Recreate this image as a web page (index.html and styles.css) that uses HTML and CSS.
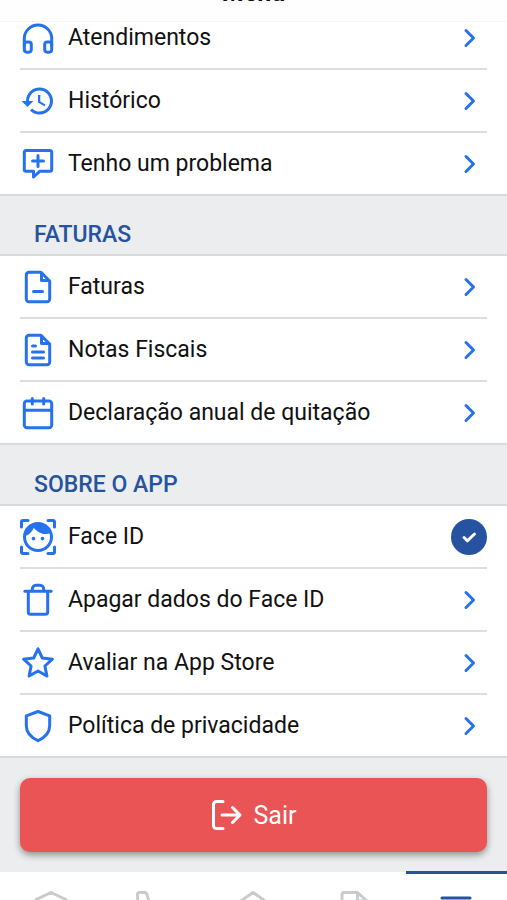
FILE: index.html
```html
<!DOCTYPE html>
<html lang="pt-BR">
<head>
<meta charset="utf-8">
<meta name="viewport" content="width=device-width, initial-scale=1">
<title>Menu</title>
<link rel="stylesheet" href="styles.css">
</head>
<body>
<svg class="defs" aria-hidden="true">
  <symbol id="chevron" viewBox="0 0 36 36"><path d="M15 10.500l7.500 7.500-7.500 7.500"/></symbol>
</svg>
<div class="app">
  <header class="topbar"><h1>Menu</h1></header>

  <main>
    <ul class="list list-first">
      <li><a class="row" href="#">
        <svg class="icon" viewBox="0 0 36 36"><path d="M4.300 25.500V18.500a13.700 13.500 0 0 1 27.400 0V25.500"/><rect x="4.300" y="22" width="7" height="10.200" rx="2.600"/><rect x="24.700" y="22" width="7" height="10.200" rx="2.600"/></svg>
        <span>Atendimentos</span><svg class="chevron"><use href="#chevron"/></svg></a></li>
      <li><a class="row" href="#">
        <svg class="icon solid" viewBox="0 0 24 24"><path d="M13 3c-4.970 0-9 4.030-9 9H1l3.890 3.890.070.140L9 12H6c0-3.870 3.130-7 7-7s7 3.130 7 7-3.130 7-7 7c-1.930 0-3.680-.790-4.940-2.060l-1.420 1.420C8.270 19.990 10.510 21 13 21c4.970 0 9-4.030 9-9s-4.030-9-9-9zm-1 5v5l4.280 2.540.720-1.210-3.500-2.080V8H12z"/></svg>
        <span>Histórico</span><svg class="chevron"><use href="#chevron"/></svg></a></li>
      <li><a class="row" href="#">
        <svg class="icon" viewBox="0 0 36 36"><path d="M6 4.500H30a1.700 1.700 0 0 1 1.700 1.700V23.500a1.700 1.700 0 0 1-1.700 1.700H20L13.500 31V25.200H6a1.700 1.700 0 0 1-1.700-1.700V6.200A1.700 1.700 0 0 1 6 4.500zM18 9.500v11M12.500 15h11"/></svg>
        <span>Tenho um problema</span><svg class="chevron"><use href="#chevron"/></svg></a></li>
    </ul>

    <h2 class="section">FATURAS</h2>
    <ul class="list">
      <li><a class="row" href="#">
        <svg class="icon" viewBox="0 0 36 36"><path d="M9 3.300H21L29.700 12V30a2.700 2.700 0 0 1-2.700 2.700H9A2.700 2.700 0 0 1 6.300 30V6A2.700 2.700 0 0 1 9 3.300zM21.500 4V11.500h7.500M13.500 22.500h9"/></svg>
        <span>Faturas</span><svg class="chevron"><use href="#chevron"/></svg></a></li>
      <li><a class="row" href="#">
        <svg class="icon" viewBox="0 0 36 36"><path d="M9 3.300H21L29.700 12V30a2.700 2.700 0 0 1-2.700 2.700H9A2.700 2.700 0 0 1 6.300 30V6A2.700 2.700 0 0 1 9 3.300zM21.500 4V11.500h7.500M12.500 14h3M12.500 20h11M12.500 26h11"/></svg>
        <span>Notas Fiscais</span><svg class="chevron"><use href="#chevron"/></svg></a></li>
      <li><a class="row" href="#">
        <svg class="icon" viewBox="0 0 36 36"><rect x="4.300" y="6" width="27.400" height="26.700" rx="2.700"/><path d="M4.300 15.200H31.700M12.300 3.500V9M23.700 3.500V9"/></svg>
        <span>Declaração anual de quitação</span><svg class="chevron"><use href="#chevron"/></svg></a></li>
    </ul>

    <h2 class="section">SOBRE O APP</h2>
    <ul class="list">
      <li><label class="row">
        <svg class="icon" viewBox="0 0 36 36"><path d="M1.500 8V3Q1.500 1.500 3 1.500H8M28 1.500h5q1.500 0 1.500 1.500V8M34.500 28v5q0 1.500-1.500 1.500H28M8 34.500H3Q1.500 34.500 1.500 33V28"/><path class="fill" transform="scale(1.500)" d="M9 11.750c-.690 0-1.250.560-1.250 1.250s.560 1.250 1.250 1.250 1.250-.560 1.250-1.250-.560-1.250-1.250-1.250zm6 0c-.690 0-1.250.560-1.250 1.250s.560 1.250 1.250 1.250 1.250-.560 1.250-1.250-.560-1.250-1.250-1.250zM12 2C6.480 2 2 6.480 2 12s4.480 10 10 10 10-4.480 10-10S17.520 2 12 2zm0 18c-4.410 0-8-3.590-8-8 0-.290.020-.580.050-.860 2.360-1.050 4.230-2.980 5.210-5.370C11.070 8.330 14.050 10 17.420 10c.780 0 1.530-.090 2.250-.260.210.710.330 1.470.330 2.260 0 4.410-3.590 8-8 8z"/></svg>
        <span>Face ID</span>
        <span class="check"><input type="checkbox" checked><svg viewBox="0 0 36 36"><path d="M13 18.500l3.300 3.300L23.500 15"/></svg></span></label></li>
      <li><a class="row" href="#">
        <svg class="icon" viewBox="0 0 36 36"><path d="M4.800 9.200H31.200M8.300 9.200V30a2.300 2.300 0 0 0 2.300 2.300H25.400A2.300 2.300 0 0 0 27.700 30V9.200M12.300 9V7a3.700 3.700 0 0 1 3.700-3.700h4A3.700 3.700 0 0 1 23.700 7V9"/></svg>
        <span>Apagar dados do Face ID</span><svg class="chevron"><use href="#chevron"/></svg></a></li>
      <li><a class="row" href="#">
        <svg class="icon" viewBox="0 0 36 36"><path d="M18 3.800L22.300 13L32.400 14.200L24.900 21L26.900 31L18 26L9.100 31L11.100 21L3.600 14.200L13.700 13z"/></svg>
        <span>Avaliar na App Store</span><svg class="chevron"><use href="#chevron"/></svg></a></li>
      <li><a class="row" href="#">
        <svg class="icon" viewBox="0 0 36 36"><path d="M18 3.500L29.700 7.800V17.500C29.700 24.500 25 29.500 18 32.700C11 29.500 6.300 24.500 6.300 17.500V7.800z"/></svg>
        <span>Política de privacidade</span><svg class="chevron"><use href="#chevron"/></svg></a></li>
    </ul>

    <div class="actions">
      <button class="logout" type="button">
        <svg viewBox="0 0 32 32"><path d="M12 2.500H5.500a3 3 0 0 0-3 3v21a3 3 0 0 0 3 3H12M11 16H29M21.500 8.500L29 16l-7.500 7.500"/></svg>
        Sair
      </button>
    </div>
  </main>

  <nav class="tabs">
    <a href="#" aria-label="Início"><svg viewBox="0 0 36 36"><path d="M18 2.500L33 9.500V26.500L18 33.500L3 26.500V9.500z"/></svg></a>
    <a href="#" aria-label="Telefone"><svg viewBox="0 0 36 36"><path d="M5 2.500H10.500Q12.500 2.500 13 4.500L15 12L11 16Q14 22 20 25L24 21L31.500 23Q33.500 23.500 33.500 25.500V31Q33.500 33.500 31 33.500C15 33 4 22 3.500 6Q3 2.500 5 2.500z"/></svg></a>
    <a href="#" aria-label="Casa"><svg viewBox="0 0 36 36"><path d="M3 13L18 2.500L33 13M6 12V33.500H30V12"/></svg></a>
    <a href="#" aria-label="Faturas"><svg viewBox="0 0 36 36"><path d="M7.500 2.500H20.500L30 11V31Q30 33.500 27.500 33.500H7.500Q5 33.500 5 31V5Q5 2.500 7.500 2.500zM20.500 2.500V11H30"/></svg></a>
    <a class="active" href="#" aria-label="Menu"><svg viewBox="0 0 36 36"><path d="M4 9H32M4 18H32M4 27H32"/></svg></a>
  </nav>
</div>
</body>
</html>
```
FILE: styles.css
```css
* { box-sizing: border-box; }

body {
  margin: 0;
  background: #ebedef;
  color: #111;
  font-family: Roboto, "Liberation Sans", sans-serif;
  font-size: 23px;
}

.defs { display: none; }

svg {
  display: block;
  fill: none;
  stroke: currentColor;
  stroke-width: 3;
  stroke-linecap: round;
  stroke-linejoin: round;
}

.app {
  height: 100vh;
  overflow: hidden;
}

.topbar {
  position: relative;
  z-index: 1;
  display: flex;
  justify-content: center;
  align-items: flex-end;
  height: 22px;
  padding-bottom: 16px;
  background: #fefefe;
  border-bottom: 1px solid #f2f3f4;
}

h1 {
  margin: 0;
  font-size: 25px;
  line-height: 24px;
  font-weight: 700;
}

.list {
  margin: 0;
  padding: 0 20px;
  list-style: none;
  background: #fff;
  border-bottom: 2px solid #d8dadc;
}

/* The list is scrolled under the top bar */
.list-first { margin-top: -15px; }
.list-first + .section { padding-top: 25px; }

.row {
  display: flex;
  align-items: center;
  gap: 12px;
  height: 63px;
  color: inherit;
  text-decoration: none;
  border-bottom: 2px solid #dcdddf;
}

.list li:last-child .row {
  height: 61px;
  border-bottom: 0;
}

.row > span:not(.check) { flex: 1; }

.icon, .chevron {
  flex: none;
  width: 36px;
  height: 36px;
  color: #2672ee;
}

.solid, .fill {
  fill: currentColor;
  stroke: none;
}

.section {
  margin: 0;
  padding: 26px 34px 5px;
  color: #2553a0;
  font-size: 23px;
  line-height: 28px;
  font-weight: 500;
  border-bottom: 2px solid #d8dadc;
}

.check {
  display: grid;
  width: 36px;
  height: 36px;
}

.check input, .check svg {
  grid-area: 1 / 1;
  width: 36px;
  height: 36px;
  margin: 0;
}

.check input {
  appearance: none;
  border-radius: 50%;
  background: #2553a0;
}

.check svg {
  z-index: 1;
  color: #fff;
  pointer-events: none;
}

.actions { padding: 20px; }

.logout {
  display: flex;
  justify-content: center;
  align-items: center;
  gap: 11px;
  width: 100%;
  height: 74px;
  border: 0;
  border-radius: 10px;
  background: #ea5455;
  color: #fff;
  font: inherit;
  font-size: 25px;
  box-shadow: 0 3px 7px rgba(0, 0, 0, 0.4);
}

.logout svg {
  width: 32px;
  height: 32px;
}

.tabs {
  display: grid;
  grid-template-columns: repeat(5, 1fr);
  background: #fff;
}

.tabs a {
  display: flex;
  justify-content: center;
  padding: 17px 0;
  color: #c9cbcd;
  border-top: 1px solid #fff;
}

.tabs svg {
  width: 36px;
  height: 36px;
}

.tabs .active {
  color: #2553a0;
  margin-top: -1px;
  padding-top: 15px;
  border-top: 3px solid #2553a0;
}
```
